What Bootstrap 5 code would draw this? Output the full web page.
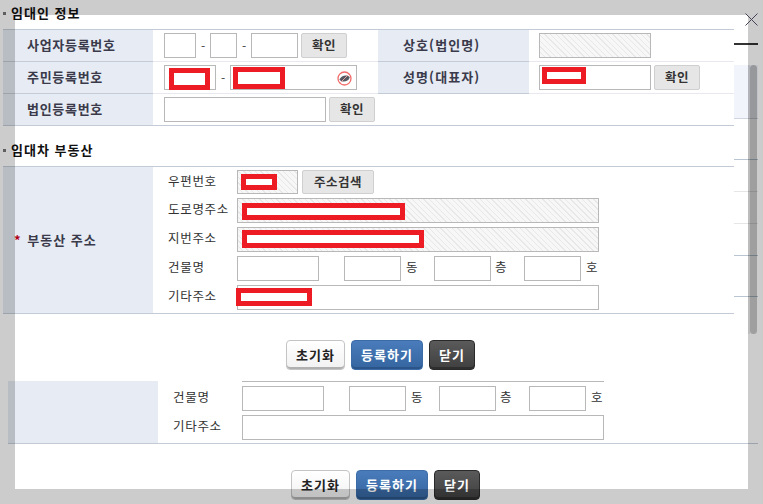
<!DOCTYPE html>
<html lang="ko">
<head>
  <meta charset="UTF-8">
  <meta name="viewport" content="width=device-width, initial-scale=1">
  <title>임대인 정보</title>
  <link href="https://cdn.jsdelivr.net/npm/bootstrap@5.3.3/dist/css/bootstrap.min.css" rel="stylesheet">
  <style>
    html, body { height: 100%; overflow: hidden; }
    body { background: #fff; font-family: "Noto Sans CJK KR", sans-serif; font-size: 13px; color: #333; line-height: 1; }
    .sheet { width: 763px; height: 504px; position: relative; overflow: hidden; }
    .form-col { width: 734px; padding-left: 3px; }
    .sec-title { font-size: 13px; font-weight: 700; color: #111; letter-spacing: 1px; margin: 0; gap: 2px; }
    .sec-title::before { content: ""; width: 3px; height: 3px; background: #777; margin-right: 3px; }
    .sec-first { height: 29px; padding-bottom: 3px; }
    .sec-next { height: 40px; padding-top: 8px; }

    .rent-tbl { border-collapse: separate; border-spacing: 0; table-layout: fixed; width: 731px; }
    .rent-tbl tr:first-child > * { border-top: 1px solid #c3ccd6; height: 33px; }
    .rent-tbl th, .rent-tbl td { height: 32px; padding: 0; border-bottom: 1px solid #e8e9ee; vertical-align: middle; }
    .rent-tbl tr:last-child > * { border-bottom-color: #c3ccd6; }
    .rent-tbl th { background: #e6ebf4; font-weight: 700; color: #3a3a4a; padding: 0 0 2px 24px; letter-spacing: .7px; border-bottom-color: #c3ccd6; }
    .rent-tbl td { padding-left: 11px; }
    .col-h { width: 150px; }
    .col-v1 { width: 225px; }
    .col-h2 { width: 151px; }
    .rent-tbl .th2 { padding-left: 25px; letter-spacing: 1.1px; }
    .rent-tbl td.td2 { padding-left: 10px; }
    .rent-tbl .addr-h { padding-left: 11px; letter-spacing: 1px; }
    .rent-tbl td.addr-d { padding: 3px 0 3px 16px; }
    .req-mark { color: #b00014; font-weight: 700; margin-right: 1px; }

    .lease-in { height: 25px; min-height: 0; padding: 0 3px; border: 1px solid #b8b8b8; border-radius: 0; font-size: 12px; flex: none; }
    .hatch { background: repeating-linear-gradient(45deg, #f7f7f7 0 3px, #e8e8e8 3px 4px); }
    .hatch:focus, .lease-in:focus { box-shadow: none; }
    .w-32 { width: 32px; } .w-27 { width: 27px; } .w-47 { width: 47px; } .w-52 { width: 52px; }
    .w-127 { width: 127px; } .w-112 { width: 112px; } .w-162 { width: 162px; } .w-61 { width: 61px; }
    .w-82 { width: 82px; } .w-57 { width: 57px; } .w-362 { width: 362px; }
    .dash { width: 14px; text-align: center; font-size: 12px; color: #444; flex: none; }
    .fix-gap { gap: 3px; }

    .mini-btn { height: 25px; width: 46px; padding: 0; font-size: 12.5px; font-weight: 700; color: #333; background: #e6e6e6; border: 1px solid #cfcfcf; border-radius: 2px; flex: none; letter-spacing: .5px; }
    .mini-wide { width: 72px; }
    .addr-lbl { width: 69px; margin-left: -1px; padding-bottom: 2px; flex: none; font-size: 12.5px; color: #333; letter-spacing: .7px; }
    .addr-rows { gap: 4px; }
    .postal { height: 24px; }
    .addr-unit { font-size: 12.5px; color: #333; width: 25px; padding: 0 0 2px 5px; flex: none; }
    .unit-dong { width: 33px; }
    .unit-sp { width: 25px; flex: none; }
    .unit-floor { width: 33px; padding-left: 4px; }

    .field-wrap { position: relative; flex: none; }
    .mask-box { position: absolute; border: 5px solid #ed1c24; background: #fff; }
    .m-resi1 { left: 5px; top: 3px; width: 41px; height: 22px; }
    .m-resi2 { left: 3px; top: 2px; width: 52px; height: 22px; }
    .m-name { left: 3px; top: 2px; width: 44px; height: 17px; }
    .m-post { left: 4px; top: 4px; width: 36px; height: 16px; }
    .m-road { left: 5px; top: 5px; width: 163px; height: 17px; }
    .m-lot { left: 5px; top: 3px; width: 182px; height: 18px; }
    .m-etc { left: -1px; top: 3px; width: 76px; height: 18px; }
    .eye-off { position: absolute; right: 5px; top: 6px; }

    .ghost { width: 24px; height: 314px; }
    .gh-line { height: 1px; background: #b9c6d2; flex: none; }
    .gh-dark { height: 2px; background: #333; margin-top: 43px; }
    .gh-panel { height: 54px; margin-top: 20px; background: #f1f4fa; border-bottom: 1px solid #cfd6e0; flex: none; }
    .gh-159 { margin-top: 40px; }
    .gh-191, .gh-223 { margin-top: 31px; background: #e6e6e6; }
    .gh-255 { margin-top: 31px; }
    .gh-296 { margin-top: 40px; }

    .act-row { gap: 6px; margin-left: 3px; width: 755px; padding-top: 26px; padding-bottom: 11px; }
    .act-low { margin-left: 8px; padding-bottom: 0; }
    .act-btn { height: 30px; padding: 0; font-size: 13px; font-weight: 700; border-radius: 4px; letter-spacing: 1px; }
    .act-reset { width: 59px; color: #222; background: linear-gradient(#fff, #f1f1f1); border: 1px solid #c4c4c4; box-shadow: inset 0 -2px 0 #b0b0b0; }
    .act-save { width: 72px; color: #fff; background: linear-gradient(#4a7cbc, #34659f); border: 1px solid #3c6ca8; box-shadow: inset 0 -2px 0 #2b5488; }
    .act-close { width: 46px; color: #fff; background: linear-gradient(#5a5a5a, #3f3f3f); border: 1px solid #2a2a2a; box-shadow: inset 0 -2px 0 #2e2e2e; }

    .lower-tbl { margin-left: 8px; width: 750px; table-layout: fixed; border-collapse: separate; border-spacing: 0; }
    .lower-tbl th { width: 150px; height: 63px; padding: 0; background: #e6ebf4; border-bottom: 1px solid #c3ccd6; }
    .lower-tbl td { padding: 0 0 0 16px; border-bottom: 1px solid #c3ccd6; vertical-align: top; }
    .cut-edge { width: 362px; height: 5px; margin-left: 68px; border-top: 1px solid #b8b8b8; }
    .lower-rows { gap: 4px; }

    .dim-frame { position: absolute; inset: 0; border: 15px solid rgba(0, 0, 0, .2); pointer-events: none; }
    .scroll-rail { position: absolute; left: 748px; top: 65px; width: 9px; height: 269px; border-left: 2px solid rgba(0, 0, 0, .08); }
    .scroll-thumb { height: 100%; background: rgba(0, 0, 0, .22); border-radius: 4px; }
    .close-x { position: absolute; left: 745px; top: 13px; }
  </style>
</head>
<body>
<div class="sheet">
  <div class="d-flex">
    <div class="form-col">
      <h6 class="sec-title sec-first d-flex align-items-center">임대인 정보</h6>
      <table class="rent-tbl">
        <colgroup><col class="col-h"><col class="col-v1"><col class="col-h2"><col></colgroup>
        <tr>
          <th>사업자등록번호</th>
          <td>
            <div class="d-flex align-items-center">
              <input class="form-control lease-in w-32"><span class="dash">-</span>
              <input class="form-control lease-in w-27"><span class="dash">-</span>
              <div class="d-flex fix-gap">
                <input class="form-control lease-in w-47"><button class="btn mini-btn" type="button">확인</button>
              </div>
            </div>
          </td>
          <th class="th2">상호(법인명)</th>
          <td class="td2"><input class="form-control lease-in hatch w-112" readonly></td>
        </tr>
        <tr>
          <th>주민등록번호</th>
          <td>
            <div class="d-flex align-items-center">
              <div class="field-wrap"><input class="form-control lease-in w-52"><span class="mask-box m-resi1"></span></div>
              <span class="dash">-</span>
              <div class="field-wrap">
                <input class="form-control lease-in w-127"><span class="mask-box m-resi2"></span>
                <svg class="eye-off" width="15" height="15" viewBox="0 0 15 15">
                  <circle cx="7.5" cy="7.5" r="6.5" fill="#fff" stroke="#f26b6b" stroke-width="1.3"/>
                  <path d="M2.4 8.6C4 4.2 10.4 3 12.8 6.2 11.6 11 4.8 12 2.4 8.6z" fill="#555a63"/>
                  <path d="M3 12 12 3" stroke="#f9a8a8" stroke-width=".9"/>
                </svg>
              </div>
            </div>
          </td>
          <th class="th2">성명(대표자)</th>
          <td class="td2">
            <div class="d-flex align-items-center fix-gap">
              <div class="field-wrap"><input class="form-control lease-in w-112"><span class="mask-box m-name"></span></div>
              <button class="btn mini-btn" type="button">확인</button>
            </div>
          </td>
        </tr>
        <tr>
          <th>법인등록번호</th>
          <td colspan="3">
            <div class="d-flex align-items-center fix-gap">
              <input class="form-control lease-in w-162"><button class="btn mini-btn" type="button">확인</button>
            </div>
          </td>
        </tr>
      </table>

      <h6 class="sec-title sec-next d-flex align-items-center">임대차 부동산</h6>
      <table class="rent-tbl">
        <colgroup><col class="col-h"><col></colgroup>
        <tr>
          <th class="addr-h"><span class="req-mark">*</span> 부동산 주소</th>
          <td class="addr-d">
            <div class="d-flex flex-column addr-rows">
              <div class="d-flex align-items-center">
                <span class="addr-lbl">우편번호</span>
                <div class="field-wrap me-1"><input class="form-control lease-in hatch postal w-61" readonly><span class="mask-box m-post"></span></div>
                <button class="btn mini-btn mini-wide postal" type="button">주소검색</button>
              </div>
              <div class="d-flex align-items-center">
                <span class="addr-lbl">도로명주소</span>
                <div class="field-wrap"><input class="form-control lease-in hatch w-362" readonly><span class="mask-box m-road"></span></div>
              </div>
              <div class="d-flex align-items-center">
                <span class="addr-lbl">지번주소</span>
                <div class="field-wrap"><input class="form-control lease-in hatch w-362" readonly><span class="mask-box m-lot"></span></div>
              </div>
              <div class="d-flex align-items-center">
                <span class="addr-lbl">건물명</span>
                <input class="form-control lease-in w-82"><span class="unit-sp"></span>
                <input class="form-control lease-in w-57"><span class="addr-unit unit-dong">동</span>
                <input class="form-control lease-in w-57"><span class="addr-unit unit-floor">층</span>
                <input class="form-control lease-in w-57"><span class="addr-unit">호</span>
              </div>
              <div class="d-flex align-items-center">
                <span class="addr-lbl">기타주소</span>
                <div class="field-wrap"><input class="form-control lease-in w-362"><span class="mask-box m-etc"></span></div>
              </div>
            </div>
          </td>
        </tr>
      </table>
    </div>
    <div class="ghost d-flex flex-column">
      <div class="gh-dark"></div>
      <div class="gh-panel"></div>
      <div class="gh-line gh-159"></div>
      <div class="gh-line gh-191"></div>
      <div class="gh-line gh-223"></div>
      <div class="gh-line gh-255"></div>
      <div class="gh-line gh-296"></div>
    </div>
  </div>

  <div class="act-row d-flex justify-content-center">
    <button class="btn act-btn act-reset" type="button">초기화</button>
    <button class="btn act-btn act-save" type="button">등록하기</button>
    <button class="btn act-btn act-close" type="button">닫기</button>
  </div>

  <table class="lower-tbl">
    <tr>
      <th></th>
      <td>
        <div class="cut-edge"></div>
        <div class="d-flex flex-column lower-rows">
          <div class="d-flex align-items-center">
            <span class="addr-lbl">건물명</span>
            <input class="form-control lease-in w-82"><span class="unit-sp"></span>
            <input class="form-control lease-in w-57"><span class="addr-unit unit-dong">동</span>
            <input class="form-control lease-in w-57"><span class="addr-unit unit-floor">층</span>
            <input class="form-control lease-in w-57"><span class="addr-unit">호</span>
          </div>
          <div class="d-flex align-items-center">
            <span class="addr-lbl">기타주소</span>
            <input class="form-control lease-in w-362">
          </div>
        </div>
      </td>
    </tr>
  </table>

  <div class="act-row act-low d-flex justify-content-center">
    <button class="btn act-btn act-reset" type="button">초기화</button>
    <button class="btn act-btn act-save" type="button">등록하기</button>
    <button class="btn act-btn act-close" type="button">닫기</button>
  </div>

  <div class="dim-frame"></div>
  <div class="scroll-rail"><div class="scroll-thumb"></div></div>
  <svg class="close-x" width="13" height="13" viewBox="0 0 13 13"><path d="M.5.5l12 12M12.5.5l-12 12" stroke="#445" stroke-width="1" fill="none"/></svg>
</div>
<script src="https://cdn.jsdelivr.net/npm/bootstrap@5.3.3/dist/js/bootstrap.bundle.min.js"></script>
</body>
</html>
